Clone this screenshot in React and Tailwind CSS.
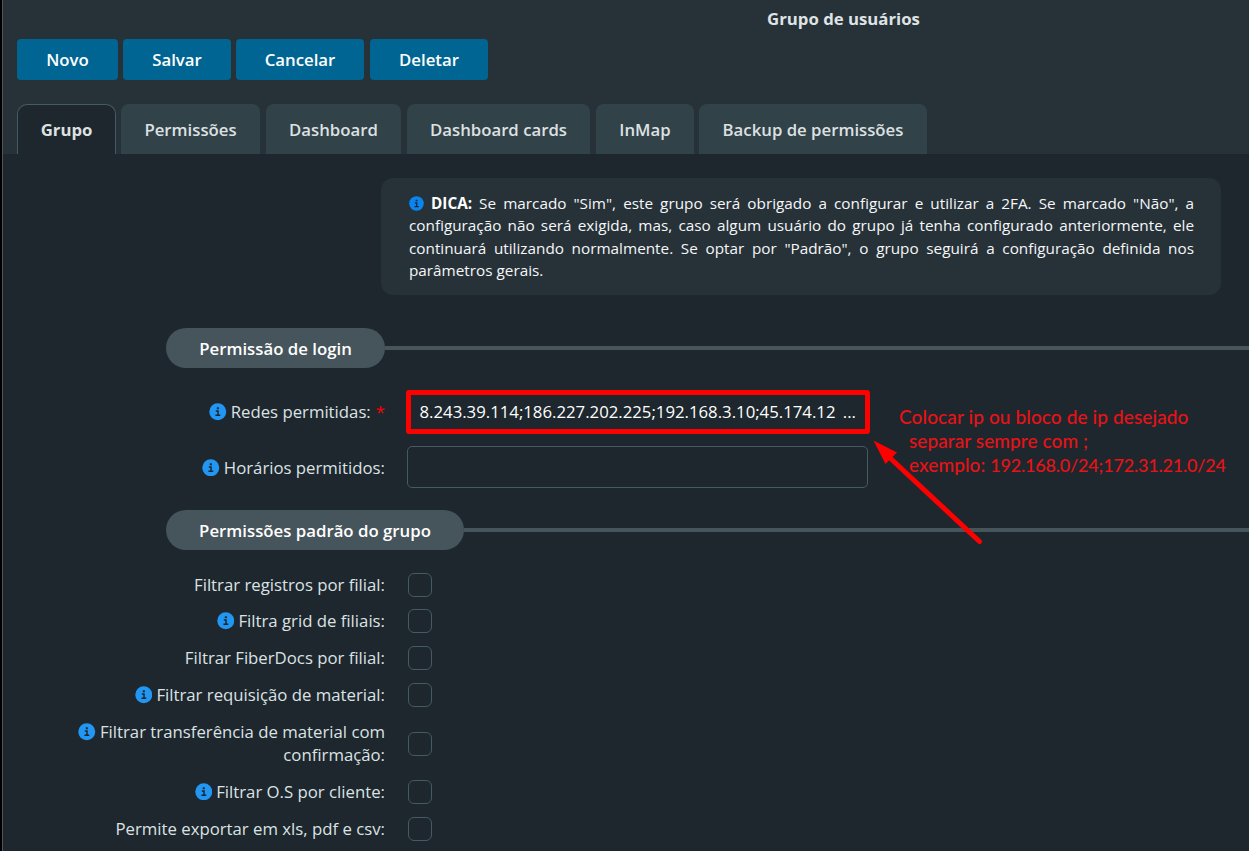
const buttons = [
  { label: "Novo", box: "w-[101px]" },
  { label: "Salvar", box: "w-[108px]" },
  { label: "Cancelar", box: "w-[128px]" },
  { label: "Deletar", box: "w-[118px] ml-px" },
];

const tabs = [
  { label: "Permissões", box: "w-[139px]" },
  { label: "Dashboard", box: "w-[135px] ml-px" },
  { label: "Dashboard cards", box: "w-[183px] ml-px" },
  { label: "InMap", box: "w-[98px] ml-px" },
  { label: "Backup de permissões", box: "w-[228px]" },
];

const checks = [
  { label: "Filtrar registros por filial:" },
  { label: "Filtra grid de filiais:", info: true },
  { label: "Filtrar FiberDocs por filial:" },
  { label: "Filtrar requisição de material:", info: true },
  { label: "Filtrar transferência de material com confirmação:", info: true },
  { label: "Filtrar O.S por cliente:", info: true },
  { label: "Permite exportar em xls, pdf e csv:" },
];

function InfoIcon({ className }) {
  return (
    <svg viewBox="0 0 18 18" className={className} aria-hidden="true">
      <circle cx="9" cy="9" r="8.75" fill="currentColor" />
      <rect x="8" y="4.400" width="2.200" height="2" rx="0.4" fill="#1d272d" />
      <path d="M7 8.300H9.300V12.500M6.600 12.600H11.600" fill="none" stroke="#1d272d" strokeWidth="1.5" />
    </svg>
  );
}

function Label({ info, required, children }) {
  return (
    <div className="w-[322px] shrink-0 text-right text-[16.75px] leading-[23px] text-[#dce2e4]">
      {info && <InfoIcon className="mr-1 inline-block size-[17.5px] align-[-2.5px] text-[#2196f3]" />}
      {children}
      {required && <span className="ml-[5px] text-[#ff0000]">*</span>}
    </div>
  );
}

function Section({ title, box }) {
  return (
    <div className="ml-[163px] flex h-10 items-center">
      <h2 className={`${box} flex h-10 items-center justify-center rounded-full bg-[#46545b] pt-0.5 text-[16.8px] font-semibold text-white`}>
        {title}
      </h2>
      <div className="h-1 flex-1 bg-[#46545b]" />
    </div>
  );
}

export default function App() {
  return (
    <div className="relative flex h-[851px] w-[1249px] overflow-hidden bg-black font-['Open_Sans','Noto_Sans',sans-serif]">
      <main className="ml-[2px] flex flex-1 flex-col border-l border-[#505557] bg-[#1d272d]">
        <header className="flex h-[154px] shrink-0 flex-col bg-[#273238] pl-[14px]">
          <h1 className="flex h-[39px] items-center pb-0.5 pl-[432px] text-center text-[16.75px] font-bold text-[#dfe3e5]">
            <span className="w-[789px]">Grupo de usuários</span>
          </h1>
          <div className="flex h-[41px] gap-[5px]">
            {buttons.map((b) => (
              <button key={b.label} className={`${b.box} rounded bg-[#006593] text-[16.8px] font-semibold text-white`}>
                {b.label}
              </button>
            ))}
          </div>
          <nav className="mt-6 flex h-[50px] gap-[5px] text-[16.75px] font-semibold text-[#dde1e2]">
            <button className="w-[99px] rounded-t-[10px] border border-b-0 border-[#455a64] bg-[#1d272d] font-bold">
              Grupo
            </button>
            {tabs.map((t) => (
              <button key={t.label} className={`${t.box} rounded-t-[8px] bg-[#324249] pt-0.5`}>
                {t.label}
              </button>
            ))}
          </nav>
        </header>

        <p className="mt-6 ml-[378px] h-[117px] w-[840px] shrink-0 rounded-[12px] bg-[#273238] py-[14px] pr-[27px] pl-7 text-justify text-[15.3px] leading-[22.3px] text-[#f5f7f8]">
          <InfoIcon className="mr-[7px] inline-block size-[15px] align-[-2px] text-[#0a84ee]" />
          <strong className="text-white">DICA:</strong> Se marcado "Sim", este grupo será obrigado a configurar e
          utilizar a 2FA. Se marcado "Não", a configuração não será exigida, mas, caso algum usuário do grupo já tenha
          configurado anteriormente, ele continuará utilizando normalmente. Se optar por "Padrão", o grupo seguirá a
          configuração definida nos parâmetros gerais.
        </p>

        <div className="mt-[33px]">
          <Section title="Permissão de login" box="w-[219px]" />
        </div>
        <div className="mt-[22px] flex h-11 items-center pl-[60px]">
          <div className="-mt-px">
            <Label info required>Redes permitidas:</Label>
          </div>
          <div className="ml-[21px] flex h-11 w-[464px] items-center justify-between rounded-[3px] border-[5px] border-[#ff0000] pr-[9px] pl-[8.5px] text-[16.75px] text-white">
            <span>8.243.39.114;186.227.202.225;192.168.3.10;45.174.12</span>
            <span>...</span>
          </div>
        </div>
        <div className="mt-3 flex h-[42px] items-center pl-[60px]">
          <Label info>Horários permitidos:</Label>
          <div className="ml-[22px] h-[42px] w-[461px] rounded-[5px] border border-[#455a64]" />
        </div>
        <div className="mt-[22px]">
          <Section title="Permissões padrão do grupo" box="w-[298px]" />
        </div>
        <div className="mt-[22.5px] flex flex-col gap-[13.9px]">
          {checks.map((c) => (
            <div key={c.label} className="flex items-center pl-[60px]">
              <Label info={c.info}>{c.label}</Label>
              <div className="mt-[-3.5px] mb-[-4.5px] ml-[23px] size-6 rounded-[6px] border border-[#455a64]" />
            </div>
          ))}
        </div>
      </main>

      <div className="absolute top-[405px] left-[899px] text-[19px] leading-6 font-medium whitespace-pre text-[#e81217] font-['Lato',sans-serif]">
        <div className="tracking-[0.11px]">Colocar ip ou bloco de ip desejado</div>
        <div className="pl-[10px] tracking-[0.08px]">separar sempre com ;</div>
        <div className="pl-[10px] tracking-[0.08px]">
          exemplo: <span className="text-[18px] tracking-[-0.19px]">192.168.0/24;172.31.21.0/24</span>
        </div>
      </div>
      <svg className="absolute top-[430px] left-[865px]" width="125" height="125" viewBox="865 430 125 125" fill="none">
        <path d="M889 457L979.500 541.500" stroke="#f00" strokeWidth="5" strokeLinecap="round" />
        <path d="M873.500 440.500L897 452.500L885.500 464Z" fill="#f00" />
      </svg>
    </div>
  );
}
